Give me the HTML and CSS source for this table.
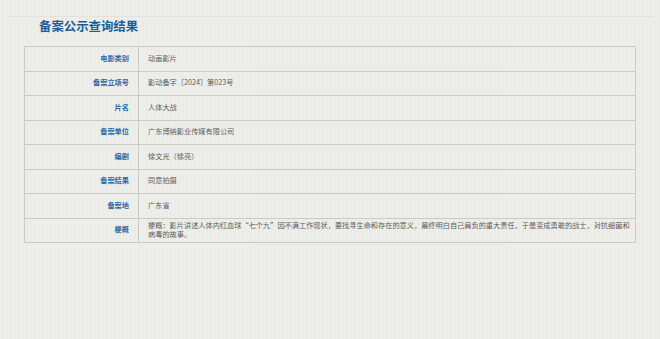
FILE: index.html
```html
<!DOCTYPE html>
<html lang="zh-CN">
<head>
<meta charset="utf-8">
<title>备案公示查询结果</title>
<link rel="stylesheet" href="styles.css">
</head>
<body>
<div class="page">
  <div class="rule"></div>
  <h1 class="title">备案公示查询结果</h1>
  <table class="result">
    <tr><th>电影类别</th><td>动画影片</td></tr>
    <tr><th>备案立项号</th><td>影动备字［2024］第023号</td></tr>
    <tr><th>片名</th><td>人体大战</td></tr>
    <tr><th>备案单位</th><td>广东博纳影业传媒有限公司</td></tr>
    <tr><th>编剧</th><td>徐文光（徐亮）</td></tr>
    <tr><th>备案结果</th><td>同意拍摄</td></tr>
    <tr><th>备案地</th><td>广东省</td></tr>
    <tr class="multi"><th>梗概</th><td>梗概：影片讲述人体内红血球“七个九”因不满工作现状，要找寻生命和存在的意义，最终明白自己肩负的重大责任，于是变成勇敢的战士，对抗细菌和病毒的故事。</td></tr>
  </table>
</div>
</body>
</html>
```
FILE: styles.css
```css
html, body {
  margin: 0;
  padding: 0;
}
body {
  background-color: #ecede8;
  background-image: repeating-linear-gradient(90deg, rgba(255,255,255,0.12) 0 1px, rgba(0,0,0,0) 1px 3px, rgba(0,0,0,0.008) 3px 4px);
  font-family: "Noto Sans CJK SC", "Noto Sans", sans-serif;
  width: 660px;
  height: 339px;
  overflow: hidden;
}
.page {
  padding-top: 16px;
}
.rule {
  margin: 0 7px 0 7px;
  border-top: 1px solid #e2e3dd;
}
.title {
  margin: 1px 0 0 39px;
  font-size: 12.4px;
  line-height: 16px;
  font-weight: bold;
  color: #1e5c9a;
}
.result {
  margin: 12px 0 0 24px;
  width: 612px;
  border-collapse: collapse;
  table-layout: fixed;
}
.result th, .result td {
  border: 1px solid #cacbc6;
  height: 23.5px;
  padding: 0;
  font-size: 7.2px;
  line-height: 9.6px;
  vertical-align: middle;
}
.result th {
  width: 104px;
  padding-right: 9px;
  text-align: right;
  color: #2d6aa5;
  font-weight: bold;
}
.result td {
  padding-left: 9px;
  padding-right: 0;
  color: #5d5d5a;
  text-align: left;
}
```
